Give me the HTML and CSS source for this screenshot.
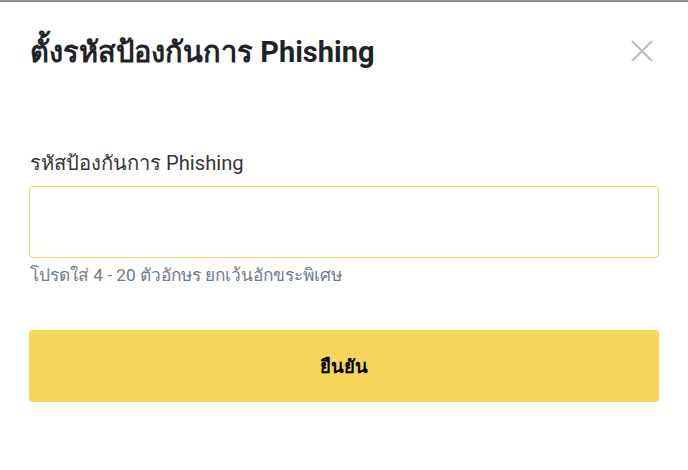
FILE: index.html
```html
<!DOCTYPE html>
<html lang="th">
<head>
<meta charset="utf-8">
<link rel="stylesheet" href="styles.css">
</head>
<body>
<div class="topbar"></div>
<div class="modal">
  <div class="header">
    <h1 class="title">ตั้งรหัสป้องกันการ Phishing</h1>
    <button class="close" aria-label="close">
      <svg width="22" height="22" viewBox="0 0 22 22"><path d="M1 1L21 21M21 1L1 21" stroke="#b7bdc6" stroke-width="2.2" fill="none"/></svg>
    </button>
  </div>
  <div class="field">
    <label class="label">รหัสป้องกันการ Phishing</label>
    <div class="input"></div>
    <div class="hint">โปรดใส่ 4 - 20 ตัวอักษร ยกเว้นอักขระพิเศษ</div>
  </div>
  <button class="confirm">ยืนยัน</button>
</div>
</body>
</html>
```
FILE: styles.css
```css
html, body { margin: 0; padding: 0; background: #fff; }
body { font-family: Roboto, "Noto Sans", "Liberation Sans", sans-serif; width: 688px; height: 470px; overflow: hidden; }
.topbar { height: 2px; background: #8c8f96; }
.modal { padding: 0 29px; }
.header { display: flex; align-items: center; justify-content: space-between; padding-top: 32px; padding-left: 1px; }
.title { margin: 0; font-size: 29px; font-weight: 700; color: #1e2329; line-height: 36px; }
.close { background: none; border: 0; padding: 0; width: 22px; height: 22px; margin-right: 6px; margin-top: -3px; }
.close svg { display: block; }
.field { margin-top: 79px; }
.label { display: block; font-size: 20.2px; color: #32363e; line-height: 28px; padding-left: 1px; }
.input { margin-top: 9px; height: 70px; border: 1px solid #f0d35e; border-radius: 4px; }
.hint { margin-top: 6px; font-size: 17.3px; color: #707a8a; line-height: 22px; padding-left: 1px; }
.confirm { display: block; width: 100%; margin-top: 44px; height: 72px; border: 0; border-radius: 4px; background: #f5d55a; font-family: inherit; font-size: 18.5px; font-weight: 700; color: #000; }
```
